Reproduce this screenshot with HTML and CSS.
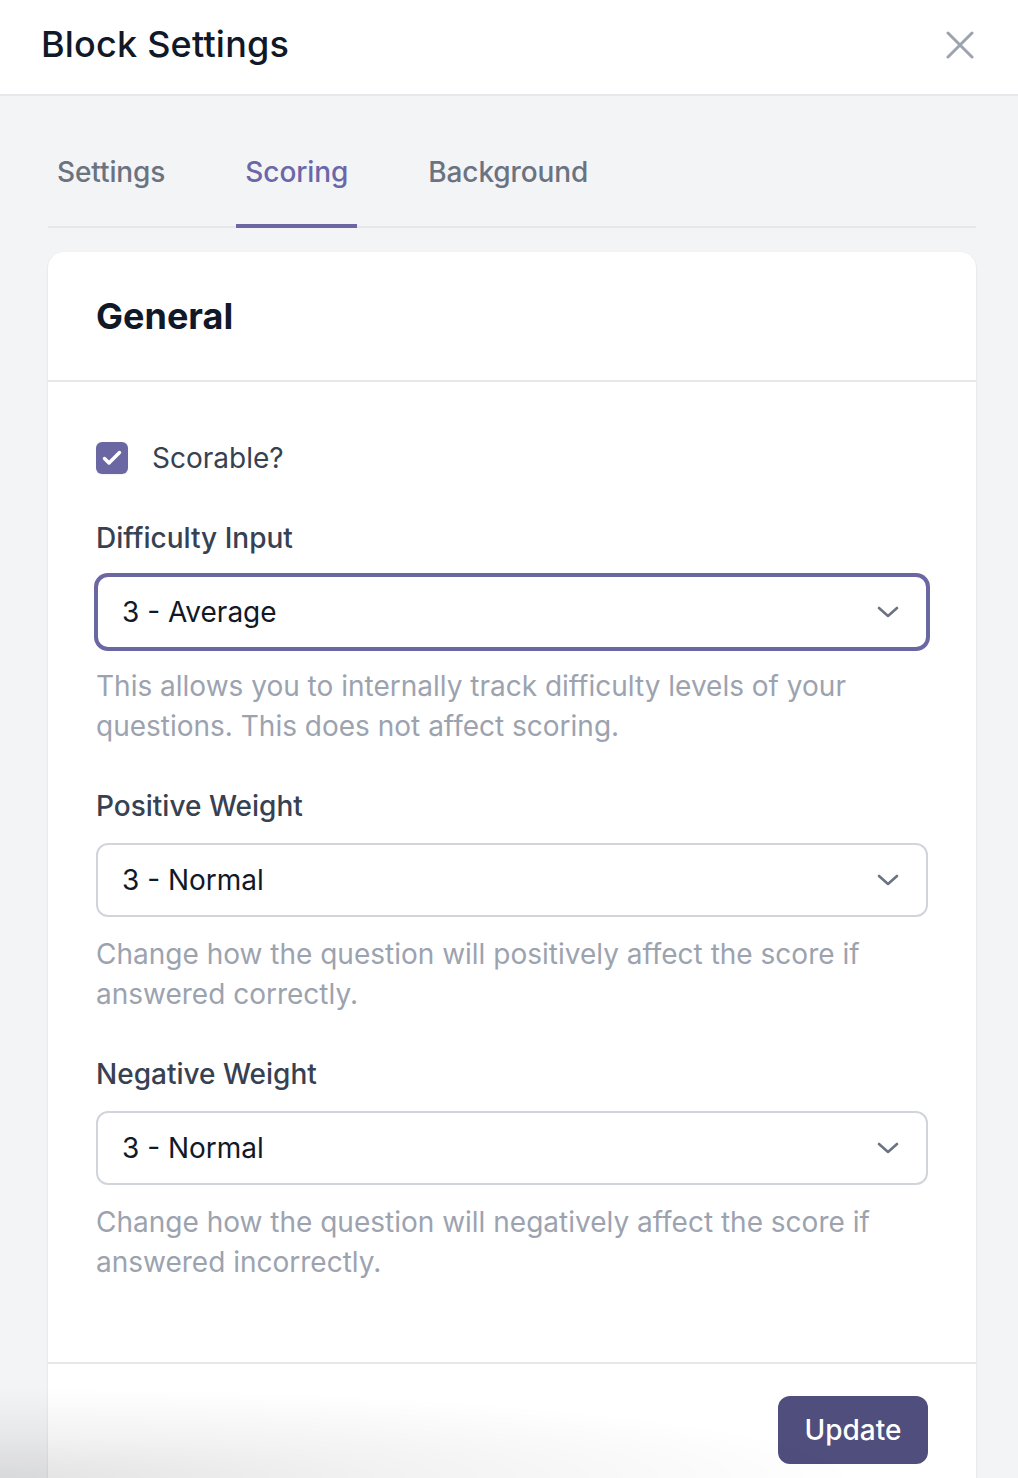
FILE: index.html
```html
<!DOCTYPE html>
<html lang="en">
<head>
<meta charset="utf-8">
<title>Block Settings</title>
<link rel="stylesheet" href="styles.css">
</head>
<body>
<div class="modal">
  <header class="modal-header">
    <h1 class="modal-title">Block Settings</h1>
    <button class="close-btn" aria-label="Close">
      <svg width="28" height="28" viewBox="0 0 28 28"><path d="M2 2L26 26M26 2L2 26" stroke="#9ca3af" stroke-width="3" stroke-linecap="round" fill="none"/></svg>
    </button>
  </header>
  <div class="modal-content">
    <nav class="tabs">
      <a class="tab">Settings</a>
      <a class="tab active">Scoring</a>
      <a class="tab">Background</a>
    </nav>
    <section class="card">
      <div class="card-header">
        <h2 class="card-title">General</h2>
      </div>
      <div class="card-body">
        <label class="check-row">
          <span class="checkbox">
            <svg width="32" height="32" viewBox="0 0 32 32"><path d="M8.5 16.5L13 21L23.5 10.5" stroke="#fff" stroke-width="3.5" stroke-linecap="round" stroke-linejoin="round" fill="none"/></svg>
          </span>
          <span class="check-label">Scorable?</span>
        </label>

        <div class="field">
          <div class="field-label">Difficulty Input</div>
          <div class="select focused">
            <span class="select-value">3 - Average</span>
            <svg class="chevron" width="22" height="12" viewBox="0 0 22 12"><path d="M2 2L11 10L20 2" stroke="#6b7280" stroke-width="2.6" stroke-linecap="round" stroke-linejoin="round" fill="none"/></svg>
          </div>
          <p class="help">This allows you to internally track difficulty levels of your questions. This does not affect scoring.</p>
        </div>

        <div class="field">
          <div class="field-label">Positive Weight</div>
          <div class="select">
            <span class="select-value">3 - Normal</span>
            <svg class="chevron" width="22" height="12" viewBox="0 0 22 12"><path d="M2 2L11 10L20 2" stroke="#6b7280" stroke-width="2.6" stroke-linecap="round" stroke-linejoin="round" fill="none"/></svg>
          </div>
          <p class="help">Change how the question will positively affect the score if answered correctly.</p>
        </div>

        <div class="field">
          <div class="field-label">Negative Weight</div>
          <div class="select">
            <span class="select-value">3 - Normal</span>
            <svg class="chevron" width="22" height="12" viewBox="0 0 22 12"><path d="M2 2L11 10L20 2" stroke="#6b7280" stroke-width="2.6" stroke-linecap="round" stroke-linejoin="round" fill="none"/></svg>
          </div>
          <p class="help">Change how the question will negatively affect the score if answered incorrectly.</p>
        </div>
      </div>
      <div class="card-footer">
        <button class="update-btn">Update</button>
      </div>
    </section>
  </div>
</div>
<div class="bottom-shade"></div>
</body>
</html>
```
FILE: styles.css
```css
* { box-sizing: border-box; }
html, body { margin: 0; padding: 0; }
body {
  background: #f3f4f6;
  font-family: Inter, "Noto Sans", "Liberation Sans", sans-serif;
  color: #111827;
  height: 1478px;
  overflow: hidden;
}
.modal-header {
  height: 96px;
  background: #fff;
  border-bottom: 2px solid #e5e7eb;
  display: flex;
  align-items: center;
  justify-content: space-between;
  padding: 0 44px 6px 41px;
}
.modal-title {
  margin: 0;
  font-size: 36px;
  font-weight: 500;
  line-height: 40px;
  color: #111827;
  letter-spacing: 0.2px;
}
.close-btn {
  border: 0;
  background: none;
  padding: 0;
  width: 28px;
  height: 28px;
  display: flex;
  margin-top: 2px;
}
.modal-content {
  padding: 56px 42px 0 48px;
}
.tabs {
  display: flex;
  gap: 62px;
  border-bottom: 2px solid #e5e7eb;
}
.tab {
  font-size: 28px;
  font-weight: 500;
  line-height: 40px;
  color: #6b7280;
  padding: 0 9px 32px;
  border-bottom: 4px solid transparent;
  margin-bottom: -2px;
  letter-spacing: -0.1px;
}
.tab.active {
  color: #6b67a8;
  border-bottom-color: #6b67a3;
}
.card {
  margin-top: 24px;
  background: #fff;
  border-radius: 16px;
  box-shadow: 0 1px 3px rgba(0,0,0,0.08), 0 1px 2px rgba(0,0,0,0.04);
}
.card-header {
  padding: 44px 48px;
  border-bottom: 2px solid #e5e7eb;
}
.card-title {
  margin: 0;
  font-size: 36px;
  font-weight: 700;
  line-height: 40px;
  color: #111827;
}
.card-body {
  padding: 56px 48px 80px;
  display: flex;
  flex-direction: column;
  gap: 40px;
}
.check-row {
  display: flex;
  align-items: center;
  height: 40px;
  gap: 24px;
}
.checkbox {
  width: 32px;
  height: 32px;
  border-radius: 6px;
  background: #6b67a3;
  display: flex;
  box-shadow: 0 1px 2px rgba(0,0,0,0.06);
}
.check-label {
  font-size: 28px;
  line-height: 40px;
  color: #374151;
}
.field-label {
  font-size: 28px;
  font-weight: 500;
  line-height: 40px;
  color: #374151;
  margin-bottom: 17px;
}
.select {
  height: 74px;
  border: 2px solid #d1d5db;
  border-radius: 12px;
  display: flex;
  align-items: center;
  justify-content: space-between;
  padding: 0 27px 0 24px;
  background: #fff;
}
.select.focused {
  border-color: #6b67a3;
  box-shadow: 0 0 0 2px #6b67a3;
}
.select-value {
  font-size: 28px;
  line-height: 40px;
  color: #111827;
}
.help {
  margin: 17px 0 0;
  font-size: 28px;
  line-height: 40px;
  color: #9ca3af;
}
.card-footer {
  border-top: 2px solid #e5e7eb;
  padding: 32px 48px 40px;
  display: flex;
  justify-content: flex-end;
}
.update-btn {
  width: 150px;
  height: 68px;
  border: 0;
  border-radius: 12px;
  background: #4f4e7d;
  color: #fff;
  font-family: inherit;
  font-size: 28px;
  font-weight: 500;
}
.bottom-shade {
  position: fixed;
  left: 0;
  bottom: 0;
  width: 860px;
  height: 90px;
  pointer-events: none;
  background: radial-gradient(ellipse 100% 100% at 0% 100%, rgba(0,0,0,0.11), rgba(0,0,0,0.05) 45%, rgba(0,0,0,0) 100%);
}
```
